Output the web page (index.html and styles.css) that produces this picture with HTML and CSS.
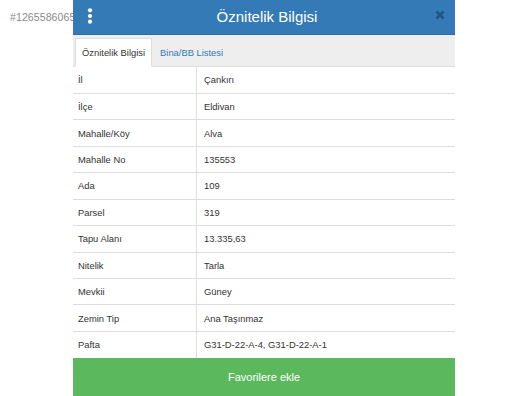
FILE: index.html
```html
<!DOCTYPE html>
<html lang="tr">
<head>
<meta charset="utf-8">
<title>Öznitelik Bilgisi</title>
<link rel="stylesheet" href="styles.css">
</head>
<body>
<div class="page">
  <div class="listing-id">#1265586065</div>
  <div class="panel">
    <div class="panel-header">
      <span class="menu-icon">
        <svg width="6" height="16" viewBox="0 0 6 16"><circle cx="3" cy="2.3" r="2.1" fill="#fff"/><circle cx="3" cy="8" r="2.1" fill="#fff"/><circle cx="3" cy="13.7" r="2.1" fill="#fff"/></svg>
      </span>
      <span class="panel-title">Öznitelik Bilgisi</span>
      <span class="close-icon">
        <svg width="10" height="10" viewBox="0 0 10 10"><path d="M1.5 1.5 L8.5 8.5 M8.5 1.5 L1.5 8.5" stroke="#23527c" stroke-width="2.6" stroke-linecap="butt"/></svg>
      </span>
    </div>
    <div class="tabs">
      <div class="tab active">Öznitelik Bilgisi</div>
      <div class="tab">Bina/BB Listesi</div>
    </div>
    <table class="attr-table">
      <tr><td class="key">İl</td><td>Çankırı</td></tr>
      <tr><td class="key">İlçe</td><td>Eldivan</td></tr>
      <tr><td class="key">Mahalle/Köy</td><td>Alva</td></tr>
      <tr><td class="key">Mahalle No</td><td>135553</td></tr>
      <tr><td class="key">Ada</td><td>109</td></tr>
      <tr><td class="key">Parsel</td><td>319</td></tr>
      <tr><td class="key">Tapu Alanı</td><td>13.335,63</td></tr>
      <tr><td class="key">Nitelik</td><td>Tarla</td></tr>
      <tr><td class="key">Mevkii</td><td>Güney</td></tr>
      <tr><td class="key">Zemin Tip</td><td>Ana Taşınmaz</td></tr>
      <tr><td class="key">Pafta</td><td>G31-D-22-A-4, G31-D-22-A-1</td></tr>
    </table>
    <div class="fav-button">Favorilere ekle</div>
  </div>
</div>
</body>
</html>
```
FILE: styles.css
```css
html, body {
  margin: 0;
  padding: 0;
  background: #fff;
  font-family: "Liberation Sans", Arial, sans-serif;
  overflow: hidden;
}
.page {
  position: relative;
  width: 528px;
  height: 396px;
  overflow: hidden;
}
.listing-id {
  position: absolute;
  left: 10px;
  top: 11px;
  font-size: 10.5px;
  color: #8a8a8a;
  letter-spacing: 0.1px;
}
.panel {
  position: relative;
  margin-left: 73px;
  width: 382px;
  background: #fff;
  display: flex;
  flex-direction: column;
}
.panel-header {
  height: 35px;
  background: #337ab7;
  display: flex;
  align-items: center;
  padding: 0 10px 0 14px;
  box-sizing: border-box;
  border-bottom: 1px solid #2e6da4;
}
.menu-icon {
  display: flex;
  width: 6px;
  margin-top: -3px;
}
.panel-title {
  flex: 1;
  text-align: center;
  color: #fff;
  font-size: 15px;
  padding-left: 6px;
  margin-top: -2px;
}
.close-icon {
  display: flex;
  width: 10px;
  margin-top: -4px;
  opacity: 0.9;
}
.tabs {
  height: 32px;
  background: #eeeeee;
  display: flex;
  align-items: flex-end;
  padding-left: 2px;
  box-sizing: border-box;
  border-bottom: 1px solid #dddddd;
}
.tab {
  height: 29px;
  box-sizing: border-box;
  display: flex;
  align-items: center;
  padding: 0 6px;
  font-size: 9.4px;
  color: #337ab7;
  margin-bottom: -1px;
  margin-right: 1px;
  white-space: nowrap;
  border: 1px solid transparent;
}
.tab.active {
  background: #fff;
  color: #333;
  border-color: #dddddd;
  border-bottom-color: #fff;
}
.attr-table {
  width: 100%;
  border-collapse: collapse;
  font-size: 9.4px;
  color: #333;
}
.attr-table tr {
  height: 26.45px;
}
.attr-table td {
  border-top: 1px solid #dddddd;
  padding: 0 0 0 7px;
  vertical-align: middle;
}
.attr-table tr:first-child td {
  border-top: none;
}
.attr-table td.key {
  width: 118px;
  padding-left: 5px;
  border-right: 1px solid #dddddd;
}
.fav-button {
  height: 40px;
  background: #5cb85c;
  color: #fff;
  font-size: 11px;
  display: flex;
  align-items: center;
  justify-content: center;
  padding-bottom: 2px;
  box-sizing: border-box;
}
```
